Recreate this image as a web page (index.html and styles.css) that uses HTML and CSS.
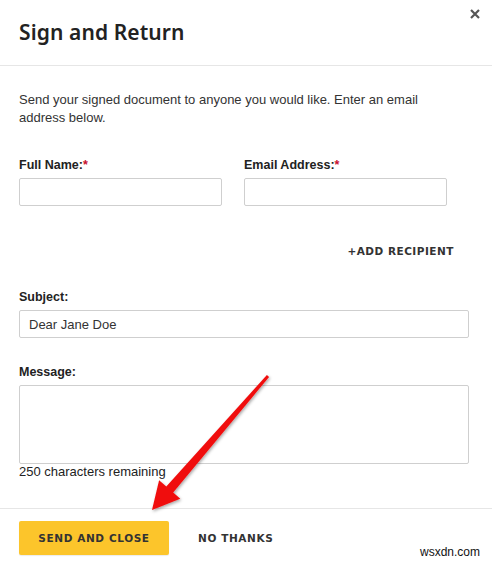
FILE: index.html
```html
<!DOCTYPE html>
<html>
<head>
<meta charset="utf-8">
<link rel="stylesheet" href="styles.css">
</head>
<body>
<div class="modal">
  <header class="modal-header">
    <h1 class="title">Sign and Return</h1>
    <button class="close" aria-label="Close">
      <svg width="10" height="10" viewBox="0 0 10 10"><path d="M1 1L9 9M9 1L1 9" stroke="#555" stroke-width="2.2" stroke-linecap="butt"/></svg>
    </button>
  </header>
  <main class="modal-body">
    <p class="intro">Send your signed document to anyone you would like. Enter an email address below.</p>
    <div class="two-col">
      <div class="field">
        <label class="label">Full Name:<span class="req">*</span></label>
        <input class="input" type="text">
      </div>
      <div class="field">
        <label class="label">Email Address:<span class="req">*</span></label>
        <input class="input" type="text">
      </div>
    </div>
    <div class="add-row"><span class="add">+ADD RECIPIENT</span></div>
    <div class="field subject">
      <label class="label">Subject:</label>
      <input class="input wide" type="text" value="Dear Jane Doe">
    </div>
    <div class="field message">
      <label class="label">Message:</label>
      <textarea class="textarea"></textarea>
      <div class="counter">250 characters remaining</div>
    </div>
  </main>
  <footer class="modal-footer">
    <button class="btn primary">SEND AND CLOSE</button>
    <button class="btn plain">NO THANKS</button>
  </footer>
</div>
<svg class="arrow" width="492" height="562" viewBox="0 0 492 562">
  <defs>
    <filter id="sh" x="-20%" y="-20%" width="140%" height="140%">
      <feDropShadow dx="1" dy="1.5" stdDeviation="1.5" flood-color="#000" flood-opacity="0.35"/>
    </filter>
  </defs>
  <polygon filter="url(#sh)" fill="#f01010" points="266.9,375 269.1,377 173.2,492.4 180.3,498.7 152,510 159.1,480.3 166.3,486.6"/>
</svg>
<div class="watermark">wsxdn.com</div>
</body>
</html>
```

FILE: styles.css
```css
* { box-sizing: border-box; }
html, body { margin: 0; padding: 0; background: #fff; }
body { width: 492px; height: 562px; overflow: hidden; position: relative; font-family: "Liberation Sans", Arial, sans-serif; color: #333; }

.modal { width: 492px; }

.modal-header {
  position: relative;
  height: 66px;
  border-bottom: 1px solid #e6e6e6;
  padding: 0 19px;
  display: flex;
  align-items: center;
}
.title {
  margin: 0;
  font-family: "Noto Sans", sans-serif;
  font-weight: 600;
  font-size: 21px;
  color: #222;
  letter-spacing: 0.1px;
  padding-bottom: 2px;
}
.close {
  position: absolute;
  top: 8px;
  right: 11px;
  width: 12px;
  height: 12px;
  padding: 0;
  border: 0;
  background: none;
  display: flex;
  align-items: center;
  justify-content: center;
}

.modal-body { padding: 25px 19px 28px 19px; }
.intro { margin: 0; font-size: 13px; line-height: 18px; color: #333; width: 420px; }

.two-col {
  margin-top: 30px;
  display: grid;
  grid-template-columns: 203px 203px;
  column-gap: 22px;
}
.field { display: flex; flex-direction: column; }
.label {
  font-family: "Liberation Sans", Arial, sans-serif;
  font-weight: 700;
  font-size: 12.5px;
  line-height: 16px;
  color: #222;
  margin-bottom: 5px;
}
.req { color: #c8102e; }
.input {
  height: 28px;
  border: 1px solid #cfcfcf;
  border-radius: 2px;
  padding: 0 9px;
  font-family: "Liberation Sans", Arial, sans-serif;
  font-size: 13px;
  color: #333;
  outline: none;
  width: 100%;
}
.add-row { margin-top: 37px; display: flex; justify-content: flex-end; padding-right: 19px; }
.add {
  font-family: "DejaVu Sans", sans-serif;
  font-weight: 700;
  font-size: 10.5px;
  line-height: 16px;
  letter-spacing: 0.5px;
  color: #333;
}
.subject { margin-top: 30px; }
.wide { width: 450px; }
.message { margin-top: 26px; }
.textarea {
  width: 450px;
  height: 79px;
  border: 1px solid #cfcfcf;
  border-radius: 2px;
  resize: none;
  outline: none;
  padding: 6px 9px;
}
.counter { font-size: 13px; line-height: 16px; color: #222; }

.modal-footer {
  border-top: 1px solid #e6e6e6;
  padding: 12px 19px 0 19px;
  display: flex;
  align-items: center;
}
.btn {
  font-family: "DejaVu Sans", sans-serif;
  font-weight: 700;
  font-size: 10.5px;
  letter-spacing: 0.6px;
  border: 0;
  cursor: pointer;
}
.primary {
  width: 150px;
  height: 34px;
  background: #fcc52b;
  color: #333;
  border-radius: 2px;
  box-shadow: 0 1px 1px rgba(0,0,0,0.08);
}
.plain { background: none; color: #333; margin-left: 29px; padding: 0; }

.arrow { position: absolute; left: 0; top: 0; pointer-events: none; }
.watermark {
  position: absolute;
  left: 418px;
  top: 545px;
  font-family: "Liberation Sans", Arial, sans-serif;
  font-size: 12px;
  color: #111;
  background: #fff;
  padding: 0 2px;
}
```
